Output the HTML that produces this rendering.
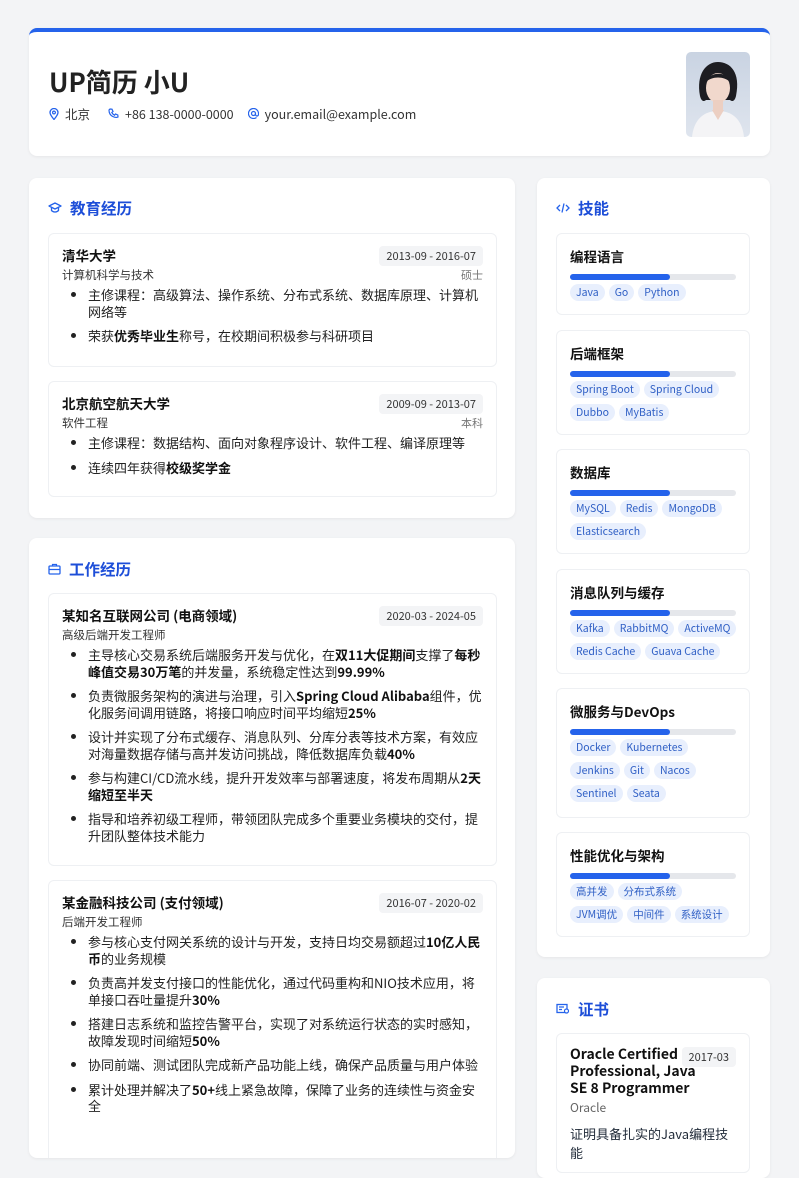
<!DOCTYPE html>
<html><head><meta charset="utf-8"><style>
*{box-sizing:border-box;margin:0;padding:0}
body{width:799px;height:1130px;overflow:hidden;background:#f3f4f6;font-family:"Noto Sans CJK SC","Liberation Sans",sans-serif;color:#1f2937;font-size:13px;position:relative}
.card{position:absolute;background:#fff;border-radius:8px;box-shadow:0 1px 3px rgba(0,0,0,.06);overflow:hidden}
.hdr{left:29px;top:28px;width:741px;height:128px;border-top:4px solid #2563eb}
h1{position:absolute;left:20px;top:32px;font-size:26px;font-weight:700;color:#222;line-height:36px}
.contact{position:absolute;left:20px;top:72px;font-size:12.5px;color:#333;display:flex;gap:14px;align-items:center}
.contact span{display:flex;align-items:center;gap:6px}
.photo{position:absolute;left:657px;top:20px;width:64px;height:85px;border-radius:5px;background:linear-gradient(180deg,#c9d3e2 0%,#dfe5ee 100%);overflow:hidden}
.st{position:absolute;font-size:15.5px;font-weight:700;color:#1d4ed8;display:flex;align-items:center;gap:8px}
.ent{position:absolute;border:1px solid #eef0f3;border-radius:6px;padding:11px 13px}
.t{font-weight:700;font-size:13.5px;color:#111;line-height:20px}
.date{position:absolute;right:13px;top:12px;background:#f3f4f6;border-radius:4px;font-size:11px;padding:2px 7px;color:#333}
.sub{font-size:11.5px;color:#333;position:relative;line-height:16px;margin-top:2px}
.deg{position:absolute;right:0;top:0;color:#777;font-size:11px}
ul{margin-top:4px;padding-left:26px}
li{font-size:13px;line-height:16.5px;margin-bottom:8px;color:#222}
b{color:#111}
.sk{position:absolute;left:19px;width:194px;border:1px solid #eef0f3;border-radius:6px;padding:12px 13px}
.sk .t{font-size:13.5px}
.bar{height:6px;background:#e5e7eb;border-radius:3px;margin-top:8px;position:relative}
.bar i{position:absolute;left:0;top:0;height:6px;width:100px;background:#2563eb;border-radius:3px}
.tags{margin-top:4px}
.row{display:flex;gap:4px;margin-bottom:6px;white-space:nowrap}
.row span{background:#e8effd;color:#2f5fc5;font-size:10.5px;border-radius:9px;padding:0 6px;line-height:17px}
</style></head><body>
<div class="card hdr">
<h1>UP简历 小U</h1>
<div class="contact">
<span><svg width="10" height="12" viewBox="0 0 10 12"><path d="M5 11.5C2.5 8.5 1 6.5 1 4.5a4 4 0 018 0c0 2-1.5 4-4 7z" fill="none" stroke="#2563eb" stroke-width="1.3"/><circle cx="5" cy="4.5" r="1.4" fill="none" stroke="#2563eb" stroke-width="1.2"/></svg>北京</span>
<span style="margin-left:4px"><svg width="11" height="11" viewBox="0 0 11 11"><path d="M2 1l2 .2 1 2.3-1.2 1a6 6 0 002.7 2.7l1-1.2 2.3 1 .2 2C8 10 1 9 1 2z" fill="none" stroke="#2563eb" stroke-width="1.2"/></svg>+86 138-0000-0000</span>
<span><svg width="11" height="11" viewBox="0 0 11 11"><circle cx="5.5" cy="5.5" r="2" fill="none" stroke="#2563eb" stroke-width="1.2"/><path d="M7.5 5.5v1a1.5 1.5 0 003 0v-1a5 5 0 10-2 4" fill="none" stroke="#2563eb" stroke-width="1.2"/></svg>your.email@example.com</span>
</div>
<div class="photo"><svg width="64" height="85" viewBox="0 0 64 85"><path d="M14 44C10 22 20 10 32 10s23 10 18 34c-2 8-6 4-6 4H20s-4 4-6-4z" fill="#1d1d22"/><ellipse cx="32" cy="36" rx="12" ry="15" fill="#f1d8cc"/><path d="M20 30c2-10 22-12 24 0-6-6-18-6-24 0z" fill="#1d1d22"/><rect x="27" y="48" width="10" height="10" fill="#eccfc2"/><path d="M6 85c2-18 12-26 26-26s24 8 26 26z" fill="#f4f4f6"/><path d="M26 58l6 10 6-10" fill="#eccfc2"/></svg></div>
</div>

<div class="card" style="left:29px;top:178px;width:486px;height:340px">
<div class="st" style="left:19px;top:19px"><svg width="14" height="12" viewBox="0 0 14 12"><path d="M7 1L1 4l6 3 6-3z M3.5 5.5v3c2 2 5 2 7 0v-3" fill="none" stroke="#2563eb" stroke-width="1.3" stroke-linejoin="round"/></svg>教育经历</div>
<div class="ent" style="left:19px;top:55px;width:449px;height:134px">
<div class="t">清华大学</div><div class="date">2013-09 - 2016-07</div>
<div class="sub">计算机科学与技术<span class="deg">硕士</span></div>
<ul><li>主修课程：高级算法、操作系统、分布式系统、数据库原理、计算机网络等</li><li>荣获<b>优秀毕业生</b>称号，在校期间积极参与科研项目</li></ul>
</div>
<div class="ent" style="left:19px;top:203px;width:449px;height:116px">
<div class="t">北京航空航天大学</div><div class="date">2009-09 - 2013-07</div>
<div class="sub">软件工程<span class="deg">本科</span></div>
<ul><li>主修课程：数据结构、面向对象程序设计、软件工程、编译原理等</li><li>连续四年获得<b>校级奖学金</b></li></ul>
</div>
</div>

<div class="card" style="left:29px;top:538px;width:486px;height:620px">
<div class="st" style="left:19px;top:20px"><svg width="13" height="12" viewBox="0 0 13 12"><rect x="1" y="3" width="11" height="8" rx="1" fill="none" stroke="#2563eb" stroke-width="1.3"/><path d="M4.5 3V1.5h4V3M1 6.5h11" fill="none" stroke="#2563eb" stroke-width="1.2"/></svg>工作经历</div>
<div class="ent" style="left:19px;top:55px;width:449px;height:273px">
<div class="t">某知名互联网公司 (电商领域)</div><div class="date">2020-03 - 2024-05</div>
<div class="sub">高级后端开发工程师</div>
<ul><li>主导核心交易系统后端服务开发与优化，在<b>双11大促期间</b>支撑了<b>每秒峰值交易30万笔</b>的并发量，系统稳定性达到<b>99.99%</b></li><li>负责微服务架构的演进与治理，引入<b>Spring Cloud Alibaba</b>组件，优化服务间调用链路，将接口响应时间平均缩短<b>25%</b></li><li>设计并实现了分布式缓存、消息队列、分库分表等技术方案，有效应对海量数据存储与高并发访问挑战，降低数据库负载<b>40%</b></li><li>参与构建CI/CD流水线，提升开发效率与部署速度，将发布周期从<b>2天缩短至半天</b></li><li>指导和培养初级工程师，带领团队完成多个重要业务模块的交付，提升团队整体技术能力</li></ul>
</div>
<div class="ent" style="left:19px;top:342px;width:449px;height:300px">
<div class="t">某金融科技公司 (支付领域)</div><div class="date">2016-07 - 2020-02</div>
<div class="sub">后端开发工程师</div>
<ul><li>参与核心支付网关系统的设计与开发，支持日均交易额超过<b>10亿人民币</b>的业务规模</li><li>负责高并发支付接口的性能优化，通过代码重构和NIO技术应用，将单接口吞吐量提升<b>30%</b></li><li>搭建日志系统和监控告警平台，实现了对系统运行状态的实时感知，故障发现时间缩短<b>50%</b></li><li>协同前端、测试团队完成新产品功能上线，确保产品质量与用户体验</li><li>累计处理并解决了<b>50+</b>线上紧急故障，保障了业务的连续性与资金安全</li></ul>
</div>
</div>

<div class="card" style="left:537px;top:178px;width:233px;height:779px">
<div class="st" style="left:19px;top:19px"><svg width="14" height="12" viewBox="0 0 14 12"><path d="M4 3L1 6l3 3M10 3l3 3-3 3M8 1.5L6 10.5" fill="none" stroke="#2563eb" stroke-width="1.3"/></svg>技能</div>
<div class="sk" style="top:55px;height:82px"><div class="t">编程语言</div><div class="bar"><i></i></div><div class="tags"><div class="row"><span>Java</span><span>Go</span><span>Python</span></div></div></div>
<div class="sk" style="top:152px;height:105px"><div class="t">后端框架</div><div class="bar"><i></i></div><div class="tags"><div class="row"><span>Spring Boot</span><span>Spring Cloud</span></div><div class="row"><span>Dubbo</span><span>MyBatis</span></div></div></div>
<div class="sk" style="top:271px;height:105px"><div class="t">数据库</div><div class="bar"><i></i></div><div class="tags"><div class="row"><span>MySQL</span><span>Redis</span><span>MongoDB</span></div><div class="row"><span>Elasticsearch</span></div></div></div>
<div class="sk" style="top:391px;height:105px"><div class="t">消息队列与缓存</div><div class="bar"><i></i></div><div class="tags"><div class="row"><span>Kafka</span><span>RabbitMQ</span><span>ActiveMQ</span></div><div class="row"><span>Redis Cache</span><span>Guava Cache</span></div></div></div>
<div class="sk" style="top:510px;height:130px"><div class="t">微服务与DevOps</div><div class="bar"><i></i></div><div class="tags"><div class="row"><span>Docker</span><span>Kubernetes</span></div><div class="row"><span>Jenkins</span><span>Git</span><span>Nacos</span></div><div class="row"><span>Sentinel</span><span>Seata</span></div></div></div>
<div class="sk" style="top:654px;height:105px"><div class="t">性能优化与架构</div><div class="bar"><i></i></div><div class="tags"><div class="row"><span>高并发</span><span>分布式系统</span></div><div class="row"><span>JVM调优</span><span>中间件</span><span>系统设计</span></div></div></div>
</div>

<div class="card" style="left:537px;top:978px;width:233px;height:200px">
<div class="st" style="left:19px;top:20px"><svg width="14" height="12" viewBox="0 0 14 12"><rect x="1" y="1.5" width="10" height="8" fill="none" stroke="#2563eb" stroke-width="1.3"/><path d="M3 4h5M3 6.5h3" stroke="#2563eb" stroke-width="1.2"/><circle cx="10.5" cy="8" r="2" fill="#fff" stroke="#2563eb" stroke-width="1.2"/></svg>证书</div>
<div class="sk" style="top:55px;height:140px">
<div class="t" style="width:132px;line-height:17px;font-size:14px;font-weight:600">Oracle Certified Professional, Java SE 8 Programmer</div>
<div class="date" style="top:13px">2017-03</div>
<div style="color:#666;font-size:12px;margin-top:2px">Oracle</div>
<div style="margin-top:8px;font-size:13px">证明具备扎实的Java编程技能</div>
</div>
</div>
</body></html>
